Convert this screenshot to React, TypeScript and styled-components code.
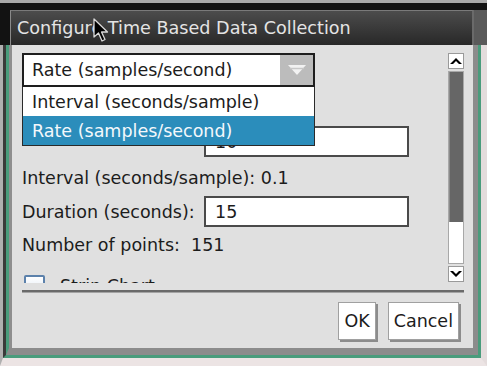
import React from 'react'
import styled, { createGlobalStyle } from 'styled-components'

const GlobalStyle = createGlobalStyle`
  html, body {
    margin: 0;
    padding: 0;
    background: #111;
  }
  * {
    box-sizing: border-box;
  }
`

const Screen = styled.div`
  width: 487px;
  height: 366px;
  display: flex;
  flex-direction: column;
  background: #121212;
  font-family: 'DejaVu Sans', 'Liberation Sans', sans-serif;
  font-size: 17.5px;
  color: #1c1c1c;
  overflow: hidden;
  position: relative;
`

const TopStrip = styled.div`
  height: 10px;
  border-top: 3px solid #a9a9a9;
  background: #121212;
`

const TitleRow = styled.div`
  height: 35px;
  display: flex;
`

const Gutter = styled.div<{ $w: number; $bg: string }>`
  width: ${(p) => p.$w}px;
  background: ${(p) => p.$bg};
`

const TitleBar = styled.div`
  flex: 1;
  display: flex;
  align-items: center;
  padding-left: 6px;
  border-top: 1px solid #7a7a7a;
  border-left: 1px solid #8a8a8a;
  border-right: 2px solid #6a6a6a;
  background: linear-gradient(#4c4c4c, #282828);
  color: #e4e4e4;
  font-size: 17.6px;
  white-space: nowrap;
`

const FrameOuter = styled.div`
  flex: 1;
  display: flex;
  border-left: 3px solid #b0b0b0;
  border-right: 6px solid #e4dcdc;
  border-bottom: 8px solid #ece4e4;
`

const FrameGreen = styled.div`
  flex: 1;
  display: flex;
  border-left: 3px solid #3a3a3a;
  border-right: 3px solid #4a9c7c;
  border-bottom: 3px solid #4a9c7c;
`

const FrameInner = styled.div`
  flex: 1;
  display: flex;
  border-left: 3px solid #4a9c7c;
  border-right: 5px solid #8c8c8c;
  border-bottom: 7px solid #8c8c8c;
  box-shadow: inset -2px -2px 0 #b8b8b8;
`

const Body = styled.div`
  flex: 1;
  display: flex;
  flex-direction: column;
  padding: 8px 9px 0 10px;
  background: #e0e0e0;
  border-left: 3px solid #8e8e8e;
`

const ScrollArea = styled.div`
  height: 230px;
  display: flex;
`

const Content = styled.div`
  flex: 1;
  position: relative;
  overflow: hidden;
  display: flex;
  flex-direction: column;
`

const SelectBox = styled.div`
  position: relative;
  width: 293px;
  height: 34px;
  flex-shrink: 0;
  display: flex;
  align-items: center;
  border: 2px solid #1e1e1e;
  background: #fff;
`

const SelectText = styled.span`
  flex: 1;
  padding-left: 8px;
`

const ArrowButton = styled.div`
  width: 33px;
  height: 100%;
  display: flex;
  align-items: center;
  justify-content: center;
  background: #bcbcbc;
`

const DropList = styled.div`
  position: absolute;
  top: 32px;
  left: -2px;
  width: 293px;
  border: 1px solid #2a2a2a;
  border-top: none;
  background: #fff;
  z-index: 2;
`

const DropItem = styled.div<{ $active?: boolean }>`
  height: 29px;
  display: flex;
  align-items: center;
  padding-left: 9px;
  background: ${(p) => (p.$active ? '#2b8dbb' : '#fff')};
  color: ${(p) => (p.$active ? '#f4f8fb' : '#1c1c1c')};
`

const FieldRow = styled.div<{ $top: number }>`
  display: flex;
  align-items: center;
  margin-top: ${(p) => p.$top}px;
  flex-shrink: 0;
`

const Label = styled.div`
  width: 182px;
  white-space: pre;
`

const Input = styled.div`
  width: 205px;
  height: 31px;
  display: flex;
  align-items: center;
  padding-left: 9px;
  border: 2px solid #4a4a4a;
  background: #fff;
`

const TextLine = styled.div<{ $top: number }>`
  height: 20px;
  line-height: 20px;
  margin-top: ${(p) => p.$top}px;
  white-space: pre;
  flex-shrink: 0;
`

const CheckRow = styled.div`
  display: flex;
  align-items: flex-start;
  gap: 15px;
  margin-top: 20px;
  padding-left: 2px;
  flex-shrink: 0;
`

const CheckBox = styled.div`
  width: 21px;
  height: 19px;
  border: 2px solid #5c81ab;
  border-radius: 2px;
  background: linear-gradient(#ffffff, #dfe9f4);
`

const CheckLabel = styled.span`
  line-height: 18px;
  margin-top: 2px;
`

const ScrollBar = styled.div`
  width: 16px;
  display: flex;
  flex-direction: column;
  gap: 2px;
  padding-bottom: 1px;
`

const ScrollButton = styled.div`
  height: 16px;
  display: flex;
  align-items: center;
  justify-content: center;
  background: #fff;
  border: 1px solid #9a9a9a;
`

const Track = styled.div`
  flex: 1;
  display: flex;
  flex-direction: column;
  background: #fff;
  border: 1px solid #a8a8a8;
`

const Thumb = styled.div`
  height: 150px;
  background: #666;
  border-left: 1px solid #8a8a8a;
`

const Separator = styled.div`
  height: 3px;
  margin-top: 7px;
  border-top: 2px solid #6a6a6a;
  border-bottom: 1px solid #a4a4a4;
`

const Footer = styled.div`
  display: flex;
  justify-content: flex-end;
  gap: 12px;
  margin-top: 9px;
  padding-right: 5px;
`

const Button = styled.div`
  height: 38px;
  display: flex;
  align-items: center;
  padding: 0 5px;
  background: #fff;
  border: 1px solid #a0a0a0;
  box-shadow: 2px 2px 0 #8c8c8c;
`

const Cursor = styled.svg`
  position: absolute;
  left: 93px;
  top: 18px;
`

const Chevron: React.FC<{ down?: boolean }> = ({ down }) => (
  <svg width="12" height="8" viewBox="0 0 12 8">
    <path
      d={down ? 'M0 1 L3 1 L6 4 L9 1 L12 1 L6 7 Z' : 'M0 7 L3 7 L6 4 L9 7 L12 7 L6 1 Z'}
      fill="#000"
    />
  </svg>
)

const App: React.FC = () => {
  return (
    <>
      <GlobalStyle />
      <Screen>
        <TopStrip />
        <TitleRow>
          <Gutter $w={10} $bg="#121212" />
          <TitleBar>Configure Time Based Data Collection</TitleBar>
          <Gutter $w={13} $bg="#5a5a5a" />
        </TitleRow>
        <FrameOuter>
          <FrameGreen>
            <FrameInner>
              <Body>
                <ScrollArea>
                  <Content>
                    <SelectBox>
                      <SelectText>Rate (samples/second)</SelectText>
                      <ArrowButton>
                        <svg width="18" height="10" viewBox="0 0 18 10">
                          <path d="M0 0 H18 L9 10 Z" fill="#f2f2f2" />
                          <path d="M2 3.5 H16" stroke="#c8c8c8" strokeWidth="1.5" />
                        </svg>
                      </ArrowButton>
                      <DropList>
                        <DropItem>Interval (seconds/sample)</DropItem>
                        <DropItem $active>Rate (samples/second)</DropItem>
                      </DropList>
                    </SelectBox>
                    <FieldRow $top={39}>
                      <Label />
                      <Input>10</Input>
                    </FieldRow>
                    <TextLine $top={11}>Interval (seconds/sample): 0.1</TextLine>
                    <FieldRow $top={8}>
                      <Label>Duration (seconds):</Label>
                      <Input>15</Input>
                    </FieldRow>
                    <TextLine $top={8}>Number of points:  151</TextLine>
                    <CheckRow>
                      <CheckBox />
                      <CheckLabel>Strip Chart</CheckLabel>
                    </CheckRow>
                  </Content>
                  <ScrollBar>
                    <ScrollButton>
                      <Chevron />
                    </ScrollButton>
                    <Track>
                      <Thumb />
                    </Track>
                    <ScrollButton>
                      <Chevron down />
                    </ScrollButton>
                  </ScrollBar>
                </ScrollArea>
                <Separator />
                <Footer>
                  <Button>OK</Button>
                  <Button>Cancel</Button>
                </Footer>
              </Body>
            </FrameInner>
          </FrameGreen>
        </FrameOuter>
        <Cursor width="17" height="25" viewBox="0 0 17 25">
          <path
            d="M1 1 L1 19 L5.5 15 L9 23 L12 21.5 L8.5 14 L14.5 14 Z"
            fill="#000"
            stroke="#d8d8d8"
            strokeWidth="1.3"
            strokeLinejoin="round"
          />
        </Cursor>
      </Screen>
    </>
  )
}

export default App
